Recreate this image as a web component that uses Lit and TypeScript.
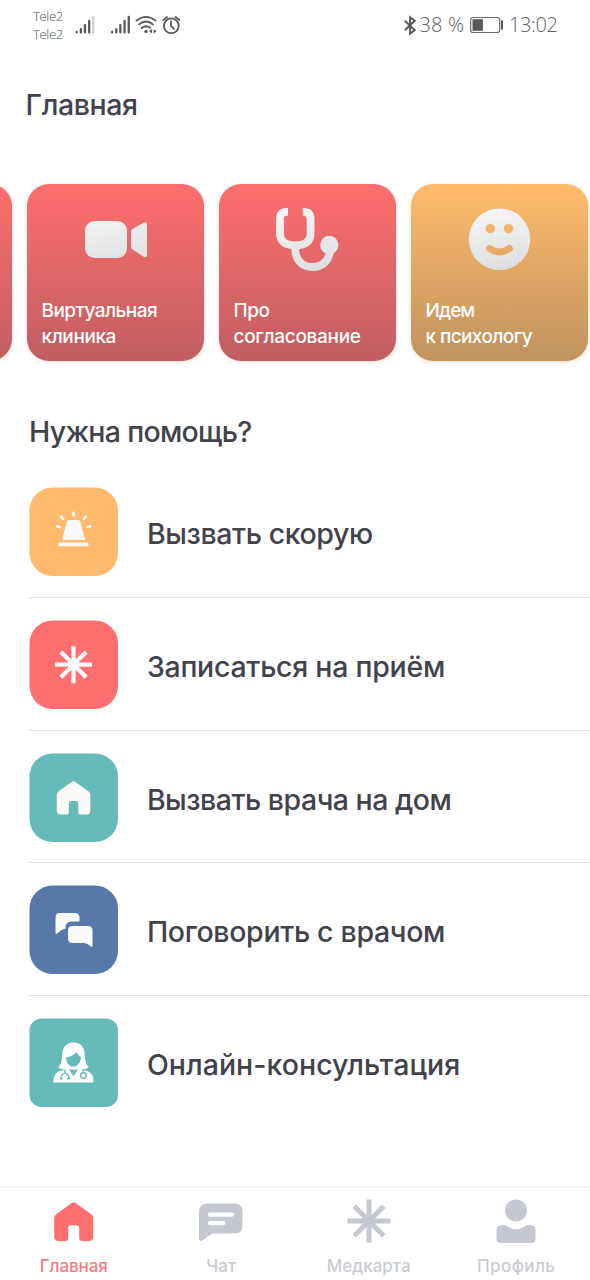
import { LitElement, html, svg, css } from "lit";
import { customElement } from "lit/decorators.js";

const burst = svg`
  <g fill="none" stroke="currentColor" stroke-width="5">
    <path d="M22 .5V43.5M.5 22H43.5M7.3 7.3L36.7 36.7M36.7 7.3L7.3 36.7"/>
  </g>`;

const house = svg`
  <path fill="currentColor" d="M17.6 .9Q19.5 -.6 21.4 .9L37 12.2Q39 13.7 39 16V34.5Q39 39 34.5 39H28Q25 39 25 36V26Q25 23.3 22.3 23.3H16.7Q14 23.3 14 26V36Q14 39 11 39H4.5Q0 39 0 34.5V16Q0 13.7 2 12.2Z"/>`;

@customElement("status-bar")
export class StatusBar extends LitElement {
  static styles = css`
    :host { display: block; height: 50px; color: #626264; font-family: "Open Sans", "Noto Sans", sans-serif; }
    .bar { display: flex; justify-content: space-between; height: 50px; padding: 0 33px; }
    .left, .right { display: flex; align-items: center; }
    .carriers { font: 300 13.2px/18px "Open Sans", sans-serif; letter-spacing: -.4px; width: 42px; color: #505052; }
    .text { font-weight: 300; font-size: 20px; line-height: 50px; white-space: nowrap; }
    .percent { letter-spacing: .15px; width: 47.5px; margin-left: .5px; }
    .time { letter-spacing: -.4px; margin-left: 6px; width: 48px; }
    .battery { margin-left: 3px; }
  `;
  render() {
    return html`
      <div class="bar">
        <div class="left">
          <div class="carriers"><div>Tele2</div><div>Tele2</div></div>
          <svg width="106" height="22" viewBox="75 13.6 106 22">
            <g fill="#59595b">
              <rect x="75.6" y="30.4" width="2.2" height="2.6" rx="1"/><rect x="79.7" y="27.5" width="2.3" height="5.5" rx="1"/>
              <rect x="83.8" y="23.5" width="2.3" height="9.5" rx="1"/><rect x="88" y="19.3" width="2.3" height="13.7" rx="1"/>
              <rect x="92.2" y="15.3" width="2.3" height="17.7" rx="1" fill="#d2d2d3"/>
              <rect x="111" y="30.4" width="2.2" height="2.6" rx="1"/><rect x="115.1" y="27.5" width="2.3" height="5.5" rx="1"/>
              <rect x="119.2" y="23.5" width="2.3" height="9.5" rx="1"/><rect x="123.4" y="19.3" width="2.3" height="13.7" rx="1"/>
              <rect x="127.6" y="15.3" width="2.3" height="17.7" rx="1"/>
            </g>
            <g fill="none" stroke="#59595b" stroke-width="1.8" stroke-linecap="round">
              <path d="M136.5 20.2Q146 12.8 155.5 20.2M139 24Q146 18.3 153 24M141.7 27.6Q146 24.2 150.3 27.4"/>
              <circle cx="171.3" cy="25.4" r="7.4"/>
              <path d="M171 21V25.5L174 28.5M163.3 19.7L167 16.6M175.6 16.6L179.3 19.7"/>
            </g>
            <circle cx="146" cy="31" r="1.7" fill="#59595b"/>
            <path d="M152 28.6V33L149 30.8ZM153.6 28.6V33L156.6 30.8Z" fill="#59595b"/>
          </svg>
        </div>
        <div class="right">
          <svg width="16" height="22" viewBox="403.6 13.6 16 22">
            <path d="M405.3 20.2L415.3 29.8L410.7 33.3V16.8L415.3 20.4L405.3 29.8" fill="none" stroke="#59595b" stroke-width="2"/>
          </svg>
          <span class="text percent">38 %</span>
          <svg class="battery" width="33" height="18" viewBox="470 16 33 18">
            <rect x="470.7" y="17.5" width="29" height="15" rx="2.5" fill="none" stroke="#6a6a6c" stroke-width="1.2"/>
            <rect x="472.5" y="19.2" width="10.4" height="11.6" fill="#59595b"/>
            <rect x="501" y="20.3" width="2" height="9.4" rx=".7" fill="#59595b"/>
          </svg>
          <span class="text time">13:02</span>
        </div>
      </div>`;
  }
}

interface Story { lines: string[]; spacing: number[]; tone: string; icon: unknown; }

const stories: Story[] = [
  { lines: ["", ""], spacing: [0, 0], tone: "red", icon: "" },
  {
    lines: ["Виртуальная", "клиника"], spacing: [-0.53, -0.4], tone: "red",
    icon: svg`<rect x="58" y="37" width="42" height="37" rx="9.5"/>
      <path d="M104 47.7Q104 46 105.5 45L117 38.6Q120 37.2 120 40V71.5Q120 74.3 117 72.9L105.5 65.5Q104 64.5 104 63Z"/>`,
  },
  {
    lines: ["Про", "согласование"], spacing: [-0.4, -0.3], tone: "red",
    icon: svg`<g fill="none" stroke="url(#shine)" stroke-width="7.8">
        <path d="M69 27.8H68Q61 27.8 61 35V50C61 57 66 61.3 76.5 61.3S91.6 57 91.6 50V35Q91.6 27.8 84.5 27.8H83.8"/>
        <path d="M76.3 61V65C76.3 77 84 83 93.5 83C103 83 110 77 111 67"/>
      </g><circle cx="110.3" cy="61" r="9.2"/>`,
  },
  {
    lines: ["Идем", "к психологу"], spacing: [-0.95, -0.6], tone: "orange",
    icon: svg`<circle cx="88.5" cy="55.3" r="30.8"/>
      <g fill="#f2b468"><circle cx="79.2" cy="44.6" r="4.7"/><circle cx="97.5" cy="44.6" r="4.7"/></g>
      <path d="M78.7 64.5Q88.5 71.5 98.3 64.5" fill="none" stroke="#e6ac66" stroke-width="7" stroke-linecap="round"/>`,
  },
];

@customElement("story-cards")
export class StoryCards extends LitElement {
  static styles = css`
    :host { display: block; overflow: hidden; }
    .track { display: flex; gap: 15px; margin-left: -165px; padding: 4px 0 8px; }
    .card { flex: none; width: 177px; height: 177px; border-radius: 22px; box-shadow: 0 1px 4px #d6606038; display: grid; color: #fff; overflow: hidden; }
    .red { background: linear-gradient(#ff6e6e, #c05e62); }
    .orange { background: linear-gradient(#ffbb6b, #c0925f); box-shadow: 0 1px 4px #c0925f50; }
    .art, .label { grid-area: 1 / 1; }
    .label { align-self: end; padding: 0 14.5px 11px; font: 500 19px/26px Inter, sans-serif; white-space: nowrap; }
  `;
  render() {
    return html`<div class="track">${stories.map(s => html`
      <div class="card ${s.tone}">
        <svg class="art" width="177" height="177" viewBox="0 0 177 177" fill="url(#shine)">
          <defs><linearGradient id="shine" gradientUnits="userSpaceOnUse" x1="80" y1="24" x2="92" y2="88">
            <stop offset="0" stop-color="#f5f5f5"/><stop offset="1" stop-color="#dcdee0"/></linearGradient></defs>
          ${s.icon}
        </svg>
        <div class="label">${s.lines.map((l, i) => html`<div style="letter-spacing:${s.spacing[i]}px">${l}</div>`)}</div>
      </div>`)}</div>`;
  }
}

interface Service { text: string; spacing: number; tone: string; icon: unknown; }

const services: Service[] = [
  {
    text: "Вызвать скорую", spacing: -0.4, tone: "orange",
    icon: svg`<path d="M37.2 34.4Q37.6 32.5 39.5 32.5H48.5Q50.4 32.5 50.8 34.4L55.6 52.6H32.4Z"/>
      <rect x="29" y="55" width="30" height="3.8" rx="1.2"/>
      <g fill="none" stroke="#fafafa" stroke-width="2.8" stroke-linecap="round">
        <path d="M44 25.5V27.8M31.7 29.3L33.6 31.3M56.3 29.3L54.4 31.3M27.6 39L30 39.6M60.6 39L58.2 39.6"/></g>`,
  },
  { text: "Записаться на приём", spacing: -0.27, tone: "red", icon: svg`<g color="#fafafa" transform="translate(25.1 25.4) scale(.859)">${burst}</g>` },
  { text: "Вызвать врача на дом", spacing: -0.5, tone: "teal", icon: svg`<g color="#fafafa" transform="translate(27.3 27.6) scale(.86)">${house}</g>` },
  {
    text: "Поговорить с врачом", spacing: -0.32, tone: "blue",
    icon: svg`<path d="M30 27.5H45Q50 27.5 50 32.5V36H42Q36 36.4 36 42V43Q32 44 27.3 48.3Q26 49 26 47.5V32.5Q26 27.5 30 27.5Z"/>
      <path d="M43 40.5H58.5Q63 40.5 63 45V60.3Q63 62 61.3 61.2Q58.5 58.2 55 57.5H43Q38.5 57.5 38.5 53V45Q38.5 40.5 43 40.5Z"/>`,
  },
  {
    text: "Онлайн-консультация", spacing: 0.04, tone: "teal square",
    icon: svg`<path fill="#fff" d="M44 24C36.5 24 33.3 29 32.8 35C32.4 41 32 46 28.6 48.8Q32 51.5 36.6 50.6L33 52.2C26 53.6 24.2 56 24 64H64C63.8 56 62 53.6 55 52.2L51.4 50.6Q56 51.5 59.4 48.8C56 46 55.6 41 55.2 35C54.7 29 51.5 24 44 24Z"/>
      <path fill="#66baba" d="M36.5 39C41 38 45 36.5 47 33.5C48 36 50 38 51.5 38.7C51.3 43.5 48.4 48.3 44 48.3S36.8 43.8 36.5 39ZM39.4 50.5Q44 52.3 48.6 50.5L44 58.2Z"/>
      <g fill="none" stroke="#66baba" stroke-width="1.4"><path d="M35.5 51.5V54.5M35.5 54.5Q31.5 56 31.2 60.5H33.5M35.5 54.5Q39.5 56 39.8 60.5H37.5M53.7 51.5V54.3"/><circle cx="54" cy="57.2" r="2.8"/></g>`,
  },
];

@customElement("service-list")
export class ServiceList extends LitElement {
  static styles = css`
    :host { display: block; padding-left: 29.4px; }
    .row { display: flex; align-items: center; gap: 29px; height: 88.5px; padding: 22px 0 21.25px; border-bottom: 1px solid #e3e3e5; }
    .row:first-child { padding-top: 0; }
    .row:last-child { border-bottom: 0; }
    .tile { flex: none; width: 88.5px; height: 88.5px; }
    .tile svg { display: block; overflow: visible; color: #ffba6d; }
    .red svg { color: #ff6f6f; } .teal svg { color: #66baba; } .blue svg { color: #5878aa; }
    .name { font: 500 28.5px/40px Inter, sans-serif; color: #42424c; white-space: nowrap; padding-top: 5.6px; }
  `;
  render() {
    return html`${services.map(s => html`
      <div class="row">
        <div class="tile ${s.tone}"><svg width="88.5" height="88.5" viewBox="-.5 -.4 88.5 88.5" fill="#fafafa">
          <rect width="88.5" height="88.5" rx=${s.tone.includes("square") ? 12 : 23} fill="currentColor"/>${s.icon}</svg></div>
        <div class="name" style="letter-spacing:${s.spacing}px">${s.text}</div>
      </div>`)}`;
  }
}

@customElement("tab-bar")
export class TabBar extends LitElement {
  static styles = css`
    :host { display: block; }
    .tabs { display: grid; grid-template-columns: repeat(4, 1fr); height: 92px; border-top: 2px solid #f5f5f5; }
    .tab { display: flex; flex-direction: column; align-items: center; color: #c5c8d0; padding-top: 10px; }
    .active { color: #ff6e6e; }
    .caption { font: 500 17px/22px Inter, sans-serif; margin-top: 11px; color: #c9cbd2; white-space: nowrap; }
    .active .caption { color: #f07c80; }
  `;
  private tabs = [
    { text: "Главная", spacing: -0.1, icon: svg`<g transform="translate(2.2 4)">${house}</g>` },
    {
      text: "Чат", spacing: 0,
      icon: svg`<path fill="currentColor" d="M9 5.5H35.5Q43.5 5.5 43.5 13.5V27.5Q43.5 35.5 35.5 35.5H13.5L3 42.6Q0 43.8 0 40.8V13.5Q0 5.5 9 5.5Z"/>
        <path d="M11 16.6H33M11 25.1H24.3" stroke="#fff" stroke-width="4.4" stroke-linecap="round"/>`,
    },
    { text: "Медкарта", spacing: 0, icon: svg`<g transform="translate(0 1)">${burst}</g>` },
    {
      text: "Профиль", spacing: 0.4,
      icon: svg`<circle cx="22" cy="12.5" r="11" fill="currentColor"/>
        <path fill="currentColor" d="M2.5 31.5Q2.5 28 6 27.6L9 27.1Q12 26.7 14.5 28.9Q22 33.5 29.5 28.9Q32 26.7 35 27.1L38 27.6Q41.5 28 41.5 31.5V40.5Q41.5 45 37 45H7Q2.5 45 2.5 40.5Z"/>`,
    },
  ];
  render() {
    return html`<div class="tabs">${this.tabs.map((t, i) => html`
      <div class="tab ${i === 0 ? "active" : ""}">
        <svg width="44" height="46" viewBox="0 0 44 46">${t.icon}</svg>
        <div class="caption" style="letter-spacing:${t.spacing}px">${t.text}</div>
      </div>`)}</div>`;
  }
}

@customElement("app-root")
export class AppRoot extends LitElement {
  static styles = css`
    :host { display: flex; flex-direction: column; height: 1280px; background: #fff; overflow: hidden; }
    .title, .heading { margin: 0; font: 500 28.5px/40px Inter, sans-serif; color: #42424c; letter-spacing: -.4px; white-space: nowrap; }
    .title { padding: 35px 0 55px 25.5px; }
    .heading { padding: 43px 0 35.2px 29px; letter-spacing: -.7px; }
    .bottom { margin-top: auto; }
  `;
  render() {
    return html`
      <status-bar></status-bar>
      <h1 class="title">Главная</h1>
      <story-cards></story-cards>
      <h2 class="heading">Нужна помощь?</h2>
      <service-list></service-list>
      <tab-bar class="bottom"></tab-bar>`;
  }
}
